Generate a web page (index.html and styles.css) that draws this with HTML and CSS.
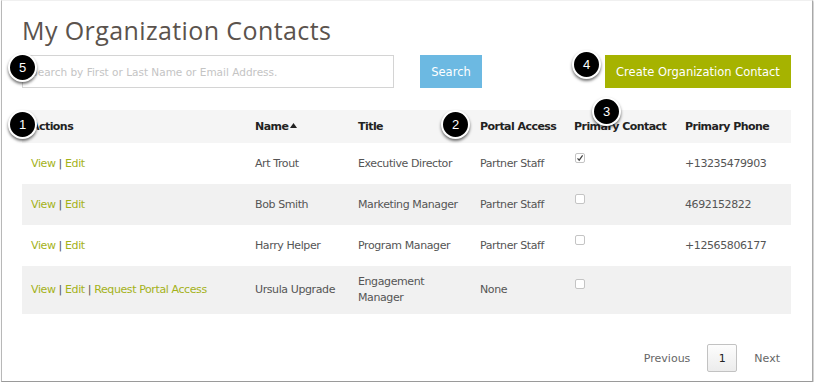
FILE: index.html
```html
<!DOCTYPE html>
<html lang="en">
<head>
<meta charset="utf-8">
<title>My Organization Contacts</title>
<link rel="stylesheet" href="styles.css">
</head>
<body>
<div class="frame">
  <h1 class="title">My Organization Contacts</h1>
  <div class="toolbar">
    <input class="search-input" type="text" placeholder="Search by First or Last Name or Email Address.">
    <button class="btn btn-search">Search</button>
    <button class="btn btn-create">Create Organization Contact</button>
  </div>
  <table class="contacts">
    <colgroup>
      <col class="c-actions"><col class="c-name"><col class="c-title"><col class="c-portal"><col class="c-primary"><col class="c-phone">
    </colgroup>
    <thead>
      <tr>
        <th>Actions</th>
        <th>Name<svg class="sort" width="7" height="5" viewBox="0 0 7 5"><path d="M0 5 L3.5 0 L7 5 Z" fill="#222"/></svg></th>
        <th>Title</th>
        <th>Portal Access</th>
        <th>Primary Contact</th>
        <th>Primary Phone</th>
      </tr>
    </thead>
    <tbody>
      <tr>
        <td><a class="lnk">View</a> | <a class="lnk">Edit</a></td>
        <td>Art Trout</td>
        <td>Executive Director</td>
        <td>Partner Staff</td>
        <td><span class="cb"><svg width="8" height="8" viewBox="0 0 8 8"><path d="M1.5 4.3 L3.2 6.2 L6.6 1.4" fill="none" stroke="#444" stroke-width="1.2"/></svg></span></td>
        <td>+13235479903</td>
      </tr>
      <tr class="alt">
        <td><a class="lnk">View</a> | <a class="lnk">Edit</a></td>
        <td>Bob Smith</td>
        <td>Marketing Manager</td>
        <td>Partner Staff</td>
        <td><span class="cb"></span></td>
        <td>4692152822</td>
      </tr>
      <tr>
        <td><a class="lnk">View</a> | <a class="lnk">Edit</a></td>
        <td>Harry Helper</td>
        <td>Program Manager</td>
        <td>Partner Staff</td>
        <td><span class="cb"></span></td>
        <td>+12565806177</td>
      </tr>
      <tr class="alt tall">
        <td><a class="lnk">View</a> | <a class="lnk">Edit</a> | <a class="lnk">Request Portal Access</a></td>
        <td>Ursula Upgrade</td>
        <td>Engagement Manager</td>
        <td>None</td>
        <td><span class="cb"></span></td>
        <td></td>
      </tr>
    </tbody>
  </table>
  <div class="pager">
    <span class="pg-text">Previous</span>
    <span class="pg-num">1</span>
    <span class="pg-text">Next</span>
  </div>

  <span class="badge b5">5</span>
  <span class="badge b1">1</span>
  <span class="badge b2">2</span>
  <span class="badge b3">3</span>
  <span class="badge b4">4</span>
</div>
</body>
</html>
```
FILE: styles.css
```css
* { box-sizing: border-box; }
html, body { margin: 0; padding: 0; background: #fff; }
body { font-family: "DejaVu Sans", "Liberation Sans", sans-serif; }

.frame {
  position: relative;
  margin-left: 1px;
  width: 812px;
  height: 382px;
  border-left: 1px solid #b8b8b8;
  border-right: 1px solid #a8a8a8;
  border-bottom: 1px solid #9a9a9a;
  border-top: 1px solid #f0f0f0;
  box-shadow: 1px 1px 2px rgba(0,0,0,0.25);
  padding: 0 21px 0 20px;
}

.title {
  margin: 13px 0 0 0;
  font-family: "Open Sans", sans-serif;
  font-weight: 400;
  font-size: 25px;
  line-height: 32px;
  color: #5b534d;
  letter-spacing: 0.4px;
}

.toolbar {
  display: flex;
  align-items: stretch;
  margin-top: 9px;
  height: 33px;
}
.search-input {
  width: 372px;
  height: 33px;
  border: 1px solid #d4d4d4;
  padding: 0 8px;
  font-family: "DejaVu Sans", sans-serif;
  font-size: 10.5px;
  color: #555;
  outline: none;
}
.search-input::placeholder { color: #c4c4c4; }
.btn {
  border: none;
  color: #fff;
  font-family: "DejaVu Sans", sans-serif;
  font-size: 11.5px;
  padding: 0;
  cursor: pointer;
}
.btn-search {
  margin-left: 26px;
  width: 62px;
  background: #6cb9e2;
}
.btn-create {
  margin-left: auto;
  width: 186px;
  background: #a6b300;
}

.contacts {
  margin-top: 22px;
  width: 769px;
  border-collapse: collapse;
  table-layout: fixed;
  font-size: 11px;
  color: #555;
}
.c-actions { width: 224px; }
.c-name { width: 103px; }
.c-title { width: 122px; }
.c-portal { width: 94px; }
.c-primary { width: 111px; }
.c-phone { width: 115px; }

.contacts th {
  background: #f5f5f5;
  text-align: left;
  font-weight: bold;
  color: #222;
  padding: 9px 9px 8px;
  height: 33px;
  line-height: 16px;
  white-space: nowrap;
  letter-spacing: -0.55px;
}
.sort { margin-left: 2px; vertical-align: 2px; }
.contacts td {
  padding: 12px 9px;
  height: 41px;
  line-height: 16px;
  vertical-align: middle;
  letter-spacing: -0.4px;
}
.contacts tr.tall td { height: 48px; padding: 8px 9px; }
.contacts tr.alt td { background: #f1f1f1; }
.lnk { color: #a4b219; text-decoration: none; }

.cb {
  width: 10px;
  height: 10px;
  border: 1px solid #c4c4c4;
  border-radius: 2px;
  background: #fff;
  margin: -6px 0 6px 1px;
  display: flex;
  align-items: center;
  justify-content: center;
}

.pager {
  display: flex;
  justify-content: flex-end;
  align-items: center;
  gap: 17px;
  margin-top: 30px;
  padding-right: 11px;
  font-size: 11px;
  color: #666;
}
.pg-num {
  width: 30px;
  height: 28px;
  border: 1px solid #c2c2c2;
  border-radius: 2px;
  background: linear-gradient(#fdfdfd, #ececec);
  color: #222;
  display: flex;
  align-items: center;
  justify-content: center;
}

.badge {
  position: absolute;
  width: 29px;
  height: 29px;
  border-radius: 50%;
  background: #000;
  border: 2px solid #fff;
  box-shadow: 0 2px 3px rgba(0,0,0,0.55);
  color: #fff;
  font-family: "Liberation Sans", sans-serif;
  font-size: 13px;
  display: flex;
  align-items: center;
  justify-content: center;
}
.b5 { left: 6px; top: 52px; }
.b1 { left: 6px; top: 109px; }
.b2 { left: 439px; top: 109px; }
.b3 { left: 590px; top: 96px; }
.b4 { left: 570px; top: 49px; }
```
